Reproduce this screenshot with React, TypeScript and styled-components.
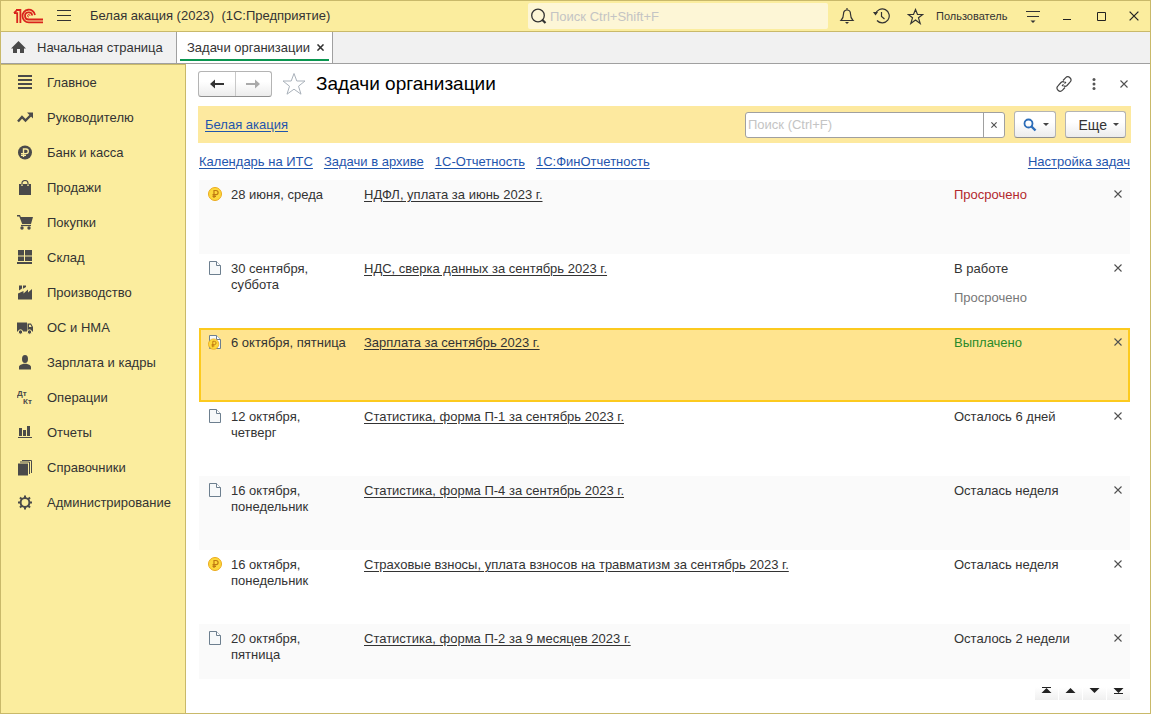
import React from "react";
import styled, { createGlobalStyle } from "styled-components";

const color = {
  frame: "#c9b96a",
  yellow: "#fbed9e",
  band: "#fde99f",
  ink: "#333333",
  icon: "#4a4a4a",
  link: "#1f55ad",
  line: "#a0a0a0",
};

const Global = createGlobalStyle`
  *, *::before, *::after { box-sizing: border-box; }
  body {
    margin: 0;
    background: #fff;
    color: ${color.ink};
    font: 13px/16px "Liberation Sans", Arial, sans-serif;
  }
  button, input { font: inherit; color: inherit; }
  button { padding: 0; border: 0; background: none; cursor: pointer; }
  svg { display: block; flex: none; }
`;

const Window = styled.div`
  display: flex;
  flex-direction: column;
  height: 100vh;
  border: 1px solid ${color.frame};
`;

const TitleBar = styled.header`
  display: flex;
  align-items: center;
  height: 31px;
  flex: none;
  background: ${color.yellow};
  border-bottom: 1px solid ${color.frame};
`;

const Brand = styled.div`
  display: flex;
  flex: 1;
  align-items: center;
  gap: 13px;
  padding-left: 12px;
  min-width: 0;
`;

const AppTitle = styled.h1`
  margin: 0 0 0 6px;
  font-size: 13px;
  font-weight: normal;
  white-space: pre;
`;

const GlobalSearch = styled.label`
  display: flex;
  align-items: center;
  gap: 3px;
  width: 300px;
  height: 26px;
  padding-left: 2px;
  border-radius: 2px;
  background: #fdf6d6;
`;

const BareInput = styled.input`
  flex: 1;
  min-width: 0;
  height: 100%;
  padding: 0;
  border: 0;
  outline: 0;
  background: transparent;
  &::placeholder { color: #c4c4c4; opacity: 1; }
`;

const BarButton = styled.button`
  display: flex;
  align-items: center;
  justify-content: center;
  width: 34px;
  height: 30px;
  &:last-child { width: 32px; }
`;

const TitleActions = styled.div`
  display: flex;
  align-items: center;
  padding-left: 2px;
`;

const UserButton = styled.button`
  width: 84px;
  padding-left: 4px;
  font-size: 11px;
  text-align: left;
`;

const Tabs = styled.nav`
  display: flex;
  flex: none;
  height: 32px;
  background: #f1f1f1;
  border-bottom: 1px solid ${color.line};
`;

const HomeTab = styled.button`
  display: flex;
  align-items: center;
  gap: 11px;
  width: 175px;
  padding-left: 10px;
`;

const ActiveTab = styled.div`
  display: flex;
  width: 157px;
  padding: 0 3px;
  background: #fff;
  border: solid ${color.line};
  border-width: 0 1px;
`;

const TabInner = styled.div`
  display: flex;
  flex: 1;
  align-items: center;
  justify-content: space-between;
  height: 29px;
  padding: 4px 5px 0 7px;
  border-bottom: 2px solid #0a9650;
  white-space: nowrap;
`;

const Body = styled.div`
  display: flex;
  flex: 1;
  min-height: 0;
`;

const Sidebar = styled.nav`
  flex: none;
  width: 185px;
  background: ${color.yellow};
  border: solid ${color.frame};
  border-width: 1px 1px 0 0;
`;

const NavItem = styled.a`
  display: flex;
  align-items: center;
  gap: 14px;
  height: 35px;
  padding-left: 16px;
  color: inherit;
  text-decoration: none;
  white-space: nowrap;
`;

const Main = styled.main`
  display: flex;
  flex: 1;
  flex-direction: column;
  min-width: 0;
  padding: 7px 19px 0 12px;
`;

const PageHeader = styled.div`
  display: flex;
  flex: none;
  align-items: center;
  height: 26px;
  margin-bottom: 9px;
`;

const History = styled.div`
  display: flex;
  width: 74px;
  height: 26px;
  border: 1px solid #b4b4b4;
  border-bottom-color: #8f8f8f;
  border-radius: 3px;
  background: linear-gradient(#fff 40%, #ececec);
`;

const HistoryButton = styled.button`
  display: flex;
  flex: 1;
  align-items: center;
  justify-content: center;
  & + & { border-left: 1px solid #c8c8c8; }
`;

const Favorite = styled.button`
  margin: 0 10px;
`;

const PageTitle = styled.h2`
  flex: 1;
  margin: 0;
  color: #000;
  font-size: 19px;
  font-weight: normal;
  line-height: 22px;
`;

const HeaderButton = styled.button`
  display: flex;
  align-items: center;
  justify-content: center;
  width: 30px;
  height: 26px;
  &:last-child { margin-right: -8px; }
`;

const Band = styled.div`
  display: flex;
  flex: none;
  align-items: center;
  height: 37px;
  padding: 0 5px 0 7px;
  background: ${color.band};
`;

const Link = styled.a`
  color: ${color.link};
  text-decoration: underline;
  text-underline-offset: 2px;
`;

const ListSearch = styled.div`
  display: flex;
  width: 260px;
  height: 26px;
  margin: 0 9px 0 auto;
  padding-left: 2px;
  background: #fff;
  border: 1px solid ${color.line};
  border-radius: 3px;
`;

const ClearButton = styled.button`
  display: flex;
  align-items: center;
  justify-content: center;
  width: 21px;
  border-left: 1px solid ${color.line};
`;

const ToolButton = styled.button<{ $width: number }>`
  display: flex;
  align-items: center;
  justify-content: flex-end;
  gap: 6px;
  width: ${(p) => p.$width}px;
  height: 27px;
  padding-right: 6px;
  border: 1px solid #b4b4b4;
  border-bottom-color: #8f8f8f;
  border-radius: 3px;
  background: linear-gradient(#fff 40%, #ececec);
  font-size: 14px;
  & + & { margin-left: 9px; }
`;

const LinksRow = styled.div`
  display: flex;
  flex: none;
  align-items: center;
  gap: 11px;
  height: 37px;
  padding: 0 1px;
  & > :last-child { margin-left: auto; }
`;

const ListArea = styled.div`
  flex: 1;
  min-height: 0;
  margin: 0 1px;
  overflow: hidden;
`;

const TaskTable = styled.table`
  width: 100%;
  table-layout: fixed;
  border-spacing: 0;
`;

const TaskRow = styled.tr<{ $selected?: boolean }>`
  height: 74px;
  &:nth-child(odd) { background: ${(p) => (p.$selected ? "#ffe48f" : "#fafafa")}; }
  ${(p) => p.$selected && "outline: 2px solid #fcca1f; outline-offset: -2px;"}
`;

const Cell = styled.td<{ $width?: number }>`
  width: ${(p) => (p.$width ? `${p.$width}px` : "auto")};
  padding: 7px 0 0;
  vertical-align: top;
`;

const IconCell = styled(Cell)`
  padding-left: 9px;
`;

const DateCell = styled(Cell)`
  padding-right: 16px;
`;

const TaskLink = styled(Link)`
  color: ${color.ink};
`;

const Status = styled.div<{ $tone?: string }>`
  color: ${(p) => p.$tone || "inherit"};
  & + & { margin-top: 13px; }
`;

const RemoveButton = styled.button`
  display: flex;
  align-items: center;
  justify-content: center;
  width: 22px;
  height: 14px;
`;

const Pager = styled.div`
  display: flex;
  flex: none;
  justify-content: flex-end;
  gap: 1px;
  height: 34px;
  padding: 8px 1px 0 0;
`;

const PagerButton = styled.button`
  display: flex;
  align-items: flex-start;
  justify-content: center;
  width: 23px;
  height: 13px;
  background: linear-gradient(#fff, #f0f0f0);
`;

const Cross = ({ size = 8, stroke = "#505050", width = 1.1 }) => (
  <svg width={size} height={size} viewBox="0 0 8 8">
    <path d="M.5.5l7 7M7.5.5l-7 7" stroke={stroke} strokeWidth={width} />
  </svg>
);

const Caret = () => (
  <svg width="6" height="3" viewBox="0 0 6 3">
    <path d="M0 0h6L3 3z" fill="#444" />
  </svg>
);

const Logo = () => (
  <svg width="31" height="16" viewBox="0 0 31 16" fill="none" stroke="#d9241c" strokeWidth="1.8">
    <path d="M1 5.200h3.200v9.800M3 2h4.400v13M1 5.200L4 2" />
    <path d="M22 7a6.300 6.300 0 1 0-6.300 7.300H30" />
    <path d="M19.200 7.500a3.600 3.600 0 1 0-3.500 4H30" />
    <path d="M17 7.800a1.200 1.200 0 1 0-1.200 1.200" strokeWidth="1" />
  </svg>
);

const MenuIcon = () => (
  <svg width="14" height="12" viewBox="0 0 14 12" stroke="#333">
    <path d="M0 .5h14M0 5.500h14M0 10.500h14" />
  </svg>
);

const NavSvg = ({ children }: { children: React.ReactNode }) => (
  <svg width="16" height="16" viewBox="0 0 16 16" fill={color.icon}>
    {children}
  </svg>
);

const navItems: { label: string; icon: React.ReactNode }[] = [
  { label: "Главное", icon: <path d="M1 0h14v2H1zM1 4h14v2H1zM1 8h14v2H1zM1 12h14v2H1z" /> },
  {
    label: "Руководителю",
    icon: (
      <>
        <path d="M1 11.500l4-4.500 3.500 3.500 5-5" fill="none" stroke={color.icon} strokeWidth="2.400" />
        <path d="M10 2.500h6v6z" />
      </>
    ),
  },
  {
    label: "Банк и касса",
    icon: (
      <>
        <circle cx="8" cy="7.500" r="7" />
        <path d="M6.500 12V4h2.500a2.300 2.300 0 0 1 0 4.600H4M4 10.400h5" fill="none" stroke={color.yellow} strokeWidth="1.400" />
      </>
    ),
  },
  {
    label: "Продажи",
    icon: (
      <>
        <path d="M2 4h2v2h2V4h4v2h2V4h2v11H2z" />
        <path d="M5 5.500V3a3 2.500 0 0 1 6 0v2.500" fill="none" stroke={color.icon} strokeWidth="1.200" />
      </>
    ),
  },
  {
    label: "Покупки",
    icon: (
      <>
        <path d="M0 0h3l.8 2H16l-2 7H5.200L2.300 1.500H0z" />
        <path d="M4 10.500h10" stroke={color.icon} strokeWidth="1.200" />
        <circle cx="5" cy="13" r="1.700" />
        <circle cx="12" cy="13" r="1.700" />
      </>
    ),
  },
  { label: "Склад", icon: <path d="M1 0h6v5.500H1zM8 0h7v5.500H8zM1 6.500h6V11H1zM8 6.500h7V11H8zM0 12h15v2H0z" /> },
  { label: "Производство", icon: <path d="M1 14.500V8.500l5.500-2.500v2.500l4.500-4v3l4-3.500v10.500zM2 .5h3v3L2 5.500zM6 .5h3v1.500L6 3.800z" /> },
  {
    label: "ОС и НМА",
    icon: (
      <>
        <path d="M0 2.500h10v9H0zM10.500 3.500H14l2 3.500v4.500h-5.500z" />
        <path d="M12 4.800h1.600l1 2.200H12z" fill={color.yellow} />
        <circle cx="3.500" cy="12" r="2.200" stroke={color.yellow} />
        <circle cx="12.500" cy="12" r="2.200" stroke={color.yellow} />
      </>
    ),
  },
  {
    label: "Зарплата и кадры",
    icon: (
      <>
        <ellipse cx="8" cy="4" rx="3" ry="3.900" />
        <path d="M2 14.500v-2.500C2 10 5 9.500 6.500 8.800h3C11 9.500 14 10 14 12v2.500z" />
      </>
    ),
  },
  {
    label: "Операции",
    icon: (
      <g fontFamily="Liberation Sans" fontWeight="bold" fontSize="8">
        <text x="0" y="6">Дт</text>
        <text x="6" y="14">Кт</text>
      </g>
    ),
  },
  { label: "Отчеты", icon: <path d="M2 3h3v8H2zM6 5h3v6H6zM10 1h3v10h-3zM1 12h14v1H1z" /> },
  {
    label: "Справочники",
    icon: (
      <>
        <path d="M1 3.500h10V15.500H1z" />
        <path d="M3 2h9.500V14M5 .5h9.500V13" fill="none" stroke={color.icon} />
      </>
    ),
  },
  {
    label: "Администрирование",
    icon: (
      <g fill="none" stroke={color.icon} strokeWidth="2">
        <circle cx="8" cy="7.500" r="4.400" />
        <path d="M8 .5v3M8 11.500v3M1 7.500h3M12 7.500h3M3 2.500l2 2M11 10.500l2 2M13 2.500l-2 2M5 10.500l-2 2" />
      </g>
    ),
  },
];

const Sheet = () => (
  <>
    <path d="M1.500.5h7l4 4v9h-11z" fill="#f7f9fa" stroke="#6d7f8f" />
    <path d="M8.500.5v4h4" fill="#fff" stroke="#6d7f8f" />
  </>
);

const TaskIcon = ({ kind }: { kind: string }) => (
  <svg width="14" height="16" viewBox="0 0 14 16">
    {kind !== "coin" && <Sheet />}
    {kind !== "doc" && (
      <g transform={kind === "both" ? "translate(0 3.500) scale(.8)" : undefined}>
        <circle cx="7" cy="7" r="6.500" fill="#fdd83c" stroke="#eba91c" />
        <path d="M6 11V3.500h2a2 2 0 0 1 0 4.200H4.500M4.500 9.300H8" fill="none" stroke="#c07a12" strokeWidth="1.200" />
      </g>
    )}
  </svg>
);

type Task = {
  icon: string;
  date: string;
  title: string;
  status: [string, string?][];
  selected?: boolean;
};

const tasks: Task[] = [
  { icon: "coin", date: "28 июня, среда", title: "НДФЛ, уплата за июнь 2023 г.", status: [["Просрочено", "#b3282d"]] },
  { icon: "doc", date: "30 сентября, суббота", title: "НДС, сверка данных за сентябрь 2023 г.", status: [["В работе"], ["Просрочено", "#777"]] },
  { icon: "both", date: "6 октября, пятница", title: "Зарплата за сентябрь 2023 г.", status: [["Выплачено", "#2a8a2a"]], selected: true },
  { icon: "doc", date: "12 октября, четверг", title: "Статистика, форма П-1 за сентябрь 2023 г.", status: [["Осталось 6 дней"]] },
  { icon: "doc", date: "16 октября, понедельник", title: "Статистика, форма П-4 за сентябрь 2023 г.", status: [["Осталась неделя"]] },
  { icon: "coin", date: "16 октября, понедельник", title: "Страховые взносы, уплата взносов на травматизм за сентябрь 2023 г.", status: [["Осталась неделя"]] },
  { icon: "doc", date: "20 октября, пятница", title: "Статистика, форма П-2 за 9 месяцев 2023 г.", status: [["Осталось 2 недели"]] },
];

const pagerIcons = [
  { label: "В начало", d: "M2 0h9v1H2zM6.500 1l5 5h-10z" },
  { label: "Вверх", d: "M6.500 1l5 5h-10z" },
  { label: "Вниз", d: "M1.500 1h10l-5 5z" },
  { label: "В конец", d: "M1.500 1h10l-5 5zM2 6h9v1H2z" },
];

export default function App() {
  return (
    <Window>
      <Global />
      <TitleBar>
        <Brand>
          <Logo />
          <button aria-label="Меню"><MenuIcon /></button>
          <AppTitle>{"Белая акация (2023)  (1С:Предприятие)"}</AppTitle>
        </Brand>
        <GlobalSearch>
          <svg width="17" height="18" viewBox="0 0 17 18" fill="none" stroke="#333">
            <circle cx="8" cy="8.500" r="6.300" strokeWidth="1.300" />
            <path d="M12 12.500l3.500 3.500" strokeWidth="2.200" />
          </svg>
          <BareInput aria-label="Поиск по программе" placeholder="Поиск Ctrl+Shift+F" />
        </GlobalSearch>
        <TitleActions>
          <BarButton aria-label="Уведомления">
            <svg width="16" height="18" viewBox="0 0 16 18" fill="none" stroke="#333" strokeWidth="1.200">
              <path d="M2 13.500c2-2 2.500-3.500 2.500-6.500C4.500 4.500 6 3 8 3s3.500 1.500 3.500 4c0 3 .5 4.500 2.500 6.500zM8 1v2" />
              <path d="M6 15h4l-2 2z" fill="#333" stroke="none" />
            </svg>
          </BarButton>
          <BarButton aria-label="История">
            <svg width="17" height="18" viewBox="0 0 17 18" fill="none" stroke="#333" strokeWidth="1.200">
              <path d="M2.500 7A7 7 0 1 1 4 13.500M8.500 5v4.500l3 2.500" />
              <path d="M0 5h5L2.500 8.500z" fill="#333" stroke="none" />
            </svg>
          </BarButton>
          <BarButton aria-label="Избранное">
            <svg width="17" height="17" viewBox="0 0 17 17" fill="none" stroke="#333" strokeWidth="1.200">
              <path d="M8.500 1.500l2 5h5.200l-4.200 3.300 1.700 5.700-4.700-3.500-4.700 3.500 1.700-5.700L1.300 6.500h5.200z" />
            </svg>
          </BarButton>
          <UserButton>Пользователь</UserButton>
          <BarButton aria-label="Настройки окна">
            <svg width="14" height="14" viewBox="0 0 14 14" stroke="#333">
              <path d="M0 2.500h14M1 7.500h12" />
              <path d="M4.500 11.500h5L7 14z" fill="#333" stroke="none" />
            </svg>
          </BarButton>
          <BarButton aria-label="Свернуть">
            <svg width="8" height="10" viewBox="0 0 8 10"><path d="M0 8.500h8" stroke="#222" /></svg>
          </BarButton>
          <BarButton aria-label="Развернуть">
            <svg width="9" height="9" viewBox="0 0 9 9"><path d="M.5.5h8v8h-8z" fill="none" stroke="#222" /></svg>
          </BarButton>
          <BarButton aria-label="Закрыть"><Cross size={10} stroke="#222" width={1} /></BarButton>
        </TitleActions>
      </TitleBar>

      <Tabs>
        <HomeTab>
          <svg width="15" height="14" viewBox="0 0 15 14" fill={color.icon}>
            <path d="M7.500 0L15 7.500h-2V12H9V8H6v4H2V7.500H0z" />
          </svg>
          Начальная страница
        </HomeTab>
        <ActiveTab>
          <TabInner>
            Задачи организации
            <button aria-label="Закрыть вкладку"><Cross size={7} stroke="#333" width={1.8} /></button>
          </TabInner>
        </ActiveTab>
      </Tabs>

      <Body>
        <Sidebar>
          {navItems.map((item) => (
            <NavItem key={item.label} href="#">
              <NavSvg>{item.icon}</NavSvg>
              {item.label}
            </NavItem>
          ))}
        </Sidebar>

        <Main>
          <PageHeader>
            <History>
              <HistoryButton aria-label="Назад">
                <svg width="14" height="10" viewBox="0 0 14 10" fill="#333"><path d="M0 5l5-4.500V4h9v2H5v3.500z" /></svg>
              </HistoryButton>
              <HistoryButton aria-label="Вперед">
                <svg width="14" height="10" viewBox="0 0 14 10" fill="#aaa"><path d="M14 5L9 .5V4H0v2h9v3.500z" /></svg>
              </HistoryButton>
            </History>
            <Favorite aria-label="В избранное">
              <svg width="24" height="24" viewBox="0 0 24 24" fill="#fff" stroke="#a9b1ba">
                <path d="M12 1.500l2.800 7.500h8.200l-6.500 5.200 2.500 8-7-5-7 5 2.500-8L1 9h8.200z" />
              </svg>
            </Favorite>
            <PageTitle>Задачи организации</PageTitle>
            <HeaderButton aria-label="Получить ссылку">
              <svg width="16" height="16" viewBox="0 0 16 16" fill="none" stroke="#444" strokeWidth="1.200">
                <path d="M7 4.500l2.500-2.700a3 3 0 0 1 4.500 4.400L11 9.500a3 3 0 0 1-3.500.3" />
                <path d="M9 11.500l-2.500 2.700A3 3 0 0 1 2 9.800l3-3.300a3 3 0 0 1 3.500-.3" />
                <path d="M6 10l1.500-1.600M8.500 7.500L10 6" />
              </svg>
            </HeaderButton>
            <HeaderButton aria-label="Дополнительно">
              <svg width="4" height="12" viewBox="0 0 4 12" fill="#555">
                <circle cx="2" cy="1.500" r="1.500" /><circle cx="2" cy="6" r="1.500" /><circle cx="2" cy="10.500" r="1.500" />
              </svg>
            </HeaderButton>
            <HeaderButton aria-label="Закрыть форму"><Cross /></HeaderButton>
          </PageHeader>

          <Band>
            <Link href="#">Белая акация</Link>
            <ListSearch>
              <BareInput aria-label="Поиск по списку" placeholder="Поиск (Ctrl+F)" />
              <ClearButton aria-label="Очистить"><Cross size={6} width={1.5} /></ClearButton>
            </ListSearch>
            <ToolButton $width={42} aria-label="Найти">
              <svg width="14" height="14" viewBox="0 0 14 14" fill="none" stroke="#2b6cb8">
                <circle cx="5.500" cy="5.500" r="4" strokeWidth="1.800" />
                <path d="M8.500 8.500l4 4" strokeWidth="2.400" />
              </svg>
              <Caret />
            </ToolButton>
            <ToolButton $width={61}>Еще<Caret /></ToolButton>
          </Band>

          <LinksRow>
            <Link href="#">Календарь на ИТС</Link>
            <Link href="#">Задачи в архиве</Link>
            <Link href="#">1С-Отчетность</Link>
            <Link href="#">1С:ФинОтчетность</Link>
            <Link href="#">Настройка задач</Link>
          </LinksRow>

          <ListArea>
            <TaskTable aria-label="Задачи организации">
              <tbody>
                {tasks.map((task) => (
                  <TaskRow key={task.title} $selected={task.selected}>
                    <IconCell $width={32}><TaskIcon kind={task.icon} /></IconCell>
                    <DateCell $width={133}>{task.date}</DateCell>
                    <Cell><TaskLink href="#">{task.title}</TaskLink></Cell>
                    <Cell $width={153}>
                      {task.status.map(([text, tone]) => (
                        <Status key={text} $tone={tone}>{text}</Status>
                      ))}
                    </Cell>
                    <Cell $width={23}>
                      <RemoveButton aria-label="Убрать задачу"><Cross /></RemoveButton>
                    </Cell>
                  </TaskRow>
                ))}
              </tbody>
            </TaskTable>
          </ListArea>

          <Pager>
            {pagerIcons.map((icon) => (
              <PagerButton key={icon.label} aria-label={icon.label}>
                <svg width="13" height="8" viewBox="0 0 13 8" fill="#222"><path d={icon.d} /></svg>
              </PagerButton>
            ))}
          </Pager>
        </Main>
      </Body>
    </Window>
  );
}
